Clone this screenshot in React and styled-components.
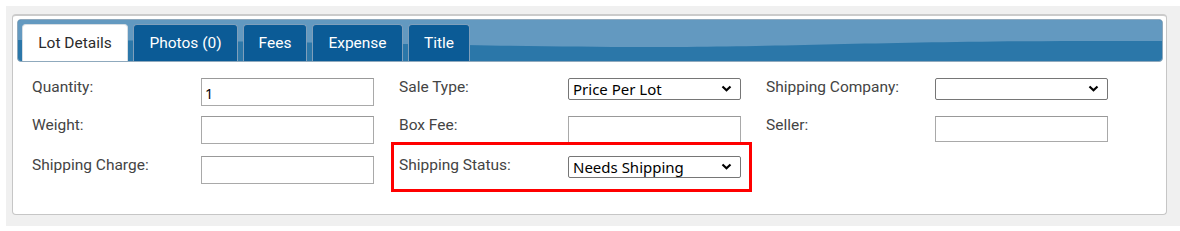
import React from 'react';
import styled, { createGlobalStyle } from 'styled-components';

const Global = createGlobalStyle`
    body {
        margin: 0;
        background: #fff;
        font-family: Roboto, "Liberation Sans", sans-serif;
    }
`

const Page = styled.div`
    padding: 6px 0 6px 6px;
    width: 1180px;
    box-sizing: border-box;
`

const Backdrop = styled.div`
    background: #f0f0f0;
    padding: 8px 13px 11px 6px;
`

const Panel = styled.div`
    position: relative;
    height: 201px;
    box-sizing: border-box;
    background: #fff;
    border: 1px solid #c6c6c6;
    border-top: 2px solid #cbcbcb;
    border-radius: 4px;
    padding: 3px 3px 0 4px;
`

const TabBar = styled.div`
    position: relative;
    height: 43px;
    box-sizing: border-box;
    border: 1px solid #8fa9bd;
    border-radius: 4px;
    overflow: hidden;
    background: #2b77a9;
    display: flex;
    align-items: flex-end;
    gap: 5px;
    padding-left: 4px;
`

const Wave = styled.svg`
    position: absolute;
    inset: 0;
    width: 100%;
    height: 100%;
`

const Tab = styled.div`
    position: relative;
    width: ${p => p.w}px;
    height: 37px;
    box-sizing: border-box;
    display: flex;
    align-items: center;
    justify-content: center;
    font-size: 15.5px;
    border: 1px solid ${p => p.active ? '#d6dde3' : '#7f9fbb'};
    border-bottom: none;
    border-radius: 4px 4px 0 0;
    background: ${p => p.active ? '#fff' : '#0b5b96'};
    color: ${p => p.active ? '#2b2b2b' : '#fff'};
`

const Form = styled.div`
    display: grid;
    grid-template-columns: 367px 367px 367px;
    grid-template-rows: 38px 40px 40px;
    padding: 16px 0 0 15px;
`

const Field = styled.div`
    display: flex;
    align-items: flex-start;
`

const Label = styled.div`
    width: 169px;
    font-size: 15.5px;
    color: #444;
    line-height: 18px;
`

const TextBox = styled.input`
    width: 173px;
    height: ${p => p.h || 28}px;
    box-sizing: border-box;
    border: 1px solid #a9a9a9;
    border-top-color: #999;
    padding: 2px 3px 0;
    font-family: "Noto Sans", "Open Sans", sans-serif;
    font-size: 14.5px;
    color: #000;
    outline: none;
`

const SelectWrap = styled.div`
    position: relative;
    width: 173px;
    height: 22px;
    svg {
        position: absolute;
        right: 9px;
        top: 7px;
        pointer-events: none;
    }
`

const Select = styled.select`
    appearance: none;
    width: 100%;
    height: 100%;
    box-sizing: border-box;
    border: 1px solid #767676;
    border-radius: 2px;
    background: #fff;
    padding: 0 0 0 4px;
    font-family: "Noto Sans", "Open Sans", sans-serif;
    font-size: 15px;
    color: #000;
    outline: none;
`

const Highlight = styled.div`
    position: absolute;
    left: 378px;
    top: 126px;
    width: 361px;
    height: 50px;
    box-sizing: border-box;
    border: 3px solid #f00;
`

const Chevron = () => (
    <svg width="11" height="7" viewBox="0 0 11 7">
        <path d="M1.5 1.5 L5.5 5.2 L9.5 1.5" fill="none" stroke="#000" strokeWidth="2.2" />
    </svg>
)

const Drop = ({ value }) => (
    <SelectWrap>
        <Select defaultValue={value}>
            <option>{value}</option>
        </Select>
        <Chevron />
    </SelectWrap>
)

const tabs = [
    { name: 'Lot Details', w: 106 },
    { name: 'Photos (0)', w: 105 },
    { name: 'Fees', w: 64 },
    { name: 'Expense', w: 91 },
    { name: 'Title', w: 62 }
]

export default function App() {
    return (
        <Page>
            <Global />
            <Backdrop>
                <Panel>
                    <TabBar>
                        <Wave viewBox="0 0 1146 41" preserveAspectRatio="none">
                            <path d="M0 0 H1146 V21 C900 20 800 26 660 27 C500 28 350 21 0 20 Z" fill="#6399c0" />
                        </Wave>
                        {tabs.map((t, i) => (
                            <Tab key={t.name} w={t.w} active={i === 0}>{t.name}</Tab>
                        ))}
                    </TabBar>
                    <Form>
                        <Field><Label>Quantity:</Label><TextBox defaultValue="1" /></Field>
                        <Field><Label>Sale Type:</Label><Drop value="Price Per Lot" /></Field>
                        <Field><Label>Shipping Company:</Label><Drop value="" /></Field>
                        <Field><Label>Weight:</Label><TextBox /></Field>
                        <Field><Label>Box Fee:</Label><TextBox /></Field>
                        <Field><Label>Seller:</Label><TextBox h={26} /></Field>
                        <Field><Label>Shipping Charge:</Label><TextBox /></Field>
                        <Field><Label>Shipping Status:</Label><Drop value="Needs Shipping" /></Field>
                        <Field />
                    </Form>
                    <Highlight />
                </Panel>
            </Backdrop>
        </Page>
    );
}
